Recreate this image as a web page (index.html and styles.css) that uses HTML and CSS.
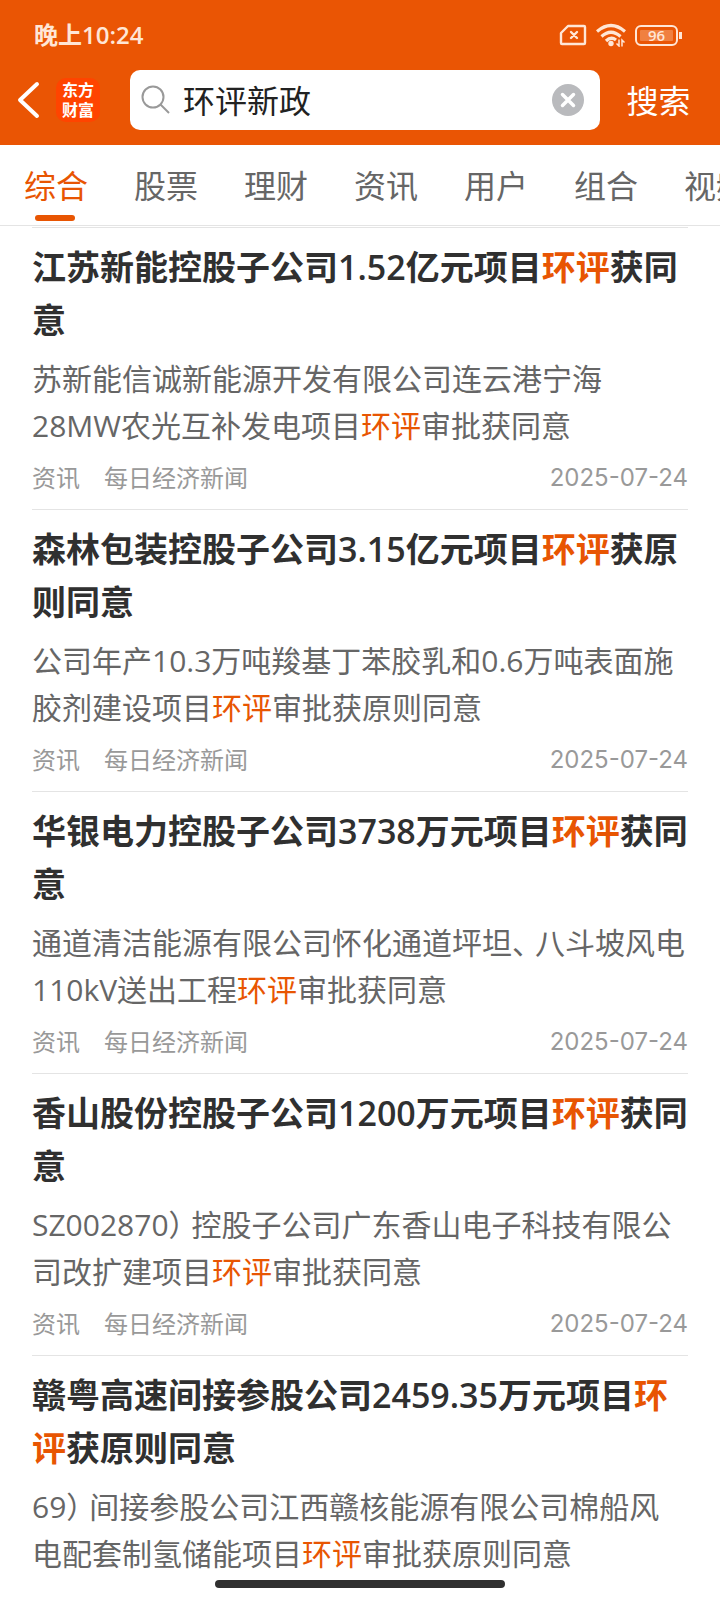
FILE: index.html
```html
<!DOCTYPE html>
<html lang="zh-CN">
	<head>
		<meta charset="UTF-8">
		<meta name="viewport" content="width=device-width, initial-scale=1">
		<title>环评新政 - 搜索</title>
		<link rel="stylesheet" href="styles.css">
	</head>
	<body>
		<header class="top">
			<!-- 状态栏 -->
			<div class="status">
				<span>晚上10:24</span>
				<div class="status-icons">
					<svg width="28" height="22" viewBox="0 0 28 22" fill="none" stroke="#ffe6d6" stroke-width="2.4" stroke-linejoin="round" stroke-linecap="round">
						<path d="M9 2h16q1 0 1 1v16q0 1-1 1H3q-1 0-1-1V9z"/>
						<path d="M12 8l6 6M18 8l-6 6"/>
					</svg>
					<svg width="30" height="24" viewBox="0 0 30 24" fill="none" stroke="#ffe6d6" stroke-width="3.2">
						<path d="M1 8.500Q15-3.500 29 8.500"/>
						<path d="M5.500 13.500Q15 5 24.500 13.500"/>
						<path d="M10 18Q15 13 20 17"/>
						<circle cx="15" cy="20.500" r="2.700" fill="#ffe6d6" stroke="none"/>
						<path d="M23 16.500v6.500l-2.500-2.500M26 23.500V17l2.500 2.500" stroke-width="1.500"/>
					</svg>
					<div class="battery">96</div>
				</div>
			</div>
			<!-- 搜索栏 -->
			<form class="search">
				<button class="back" type="button" aria-label="返回">
					<svg width="24" height="40" viewBox="0 0 24 40" fill="none" stroke="#fff" stroke-width="4" stroke-linecap="round" stroke-linejoin="round">
						<path d="M21 4L4 20l17 16"/>
					</svg>
				</button>
				<a class="logo" href="#">东方<br>财富</a>
				<div class="box">
					<svg width="30" height="30" viewBox="0 0 30 30" fill="none" stroke="#999" stroke-width="2">
						<circle cx="12" cy="12" r="10.500"/>
						<path d="M19.500 19.500L28 28"/>
					</svg>
					<input type="text" value="环评新政" aria-label="搜索内容">
					<button class="clear" type="button" aria-label="清空">
						<svg width="32" height="32" viewBox="0 0 32 32">
							<circle cx="16" cy="16" r="16" fill="#b9babd"/>
							<path d="M10.500 10.500l11 11M21.500 10.500l-11 11" stroke="#fff" stroke-width="3.500" stroke-linecap="round"/>
						</svg>
					</button>
				</div>
				<button class="go" type="submit">搜索</button>
			</form>
		</header>
		<nav class="tabs">
			<a class="on" href="#">综合</a>
			<a href="#">股票</a>
			<a href="#">理财</a>
			<a href="#">资讯</a>
			<a href="#">用户</a>
			<a href="#">组合</a>
			<a href="#">视频</a>
		</nav>
		<main class="list">
			<article class="item">
				<h2>江苏新能控股子公司1.52亿元项目<em>环评</em>获同意</h2>
				<p>苏新能信诚新能源开发有限公司连云港宁海28MW农光互补发电项目<em>环评</em>审批获同意</p>
				<div class="meta"><span>资讯</span><span>每日经济新闻</span><time>2025-07-24</time></div>
			</article>
			<article class="item">
				<h2>森林包装控股子公司3.15亿元项目<em>环评</em>获原则同意</h2>
				<p>公司年产10.3万吨羧基丁苯胶乳和0.6万吨表面施胶剂建设项目<em>环评</em>审批获原则同意</p>
				<div class="meta"><span>资讯</span><span>每日经济新闻</span><time>2025-07-24</time></div>
			</article>
			<article class="item">
				<h2>华银电力控股子公司3738万元项目<em>环评</em>获同意</h2>
				<p>通道清洁能源有限公司怀化通道坪坦<span class="punct">、</span>八斗坡风电110kV送出工程<em>环评</em>审批获同意</p>
				<div class="meta"><span>资讯</span><span>每日经济新闻</span><time>2025-07-24</time></div>
			</article>
			<article class="item">
				<h2>香山股份控股子公司1200万元项目<em>环评</em>获同意</h2>
				<p>SZ002870<span class="punct">）</span>控股子公司广东香山电子科技有限公司改扩建项目<em>环评</em>审批获同意</p>
				<div class="meta"><span>资讯</span><span>每日经济新闻</span><time>2025-07-24</time></div>
			</article>
			<article class="item">
				<h2>赣粤高速间接参股公司2459.35万元项目<em>环评</em>获原则同意</h2>
				<p>69<span class="punct">）</span>间接参股公司江西赣核能源有限公司棉船风电配套制氢储能项目<em>环评</em>审批获原则同意</p>
			</article>
		</main>
		<div class="home-bar"></div>
	</body>
</html>
```

FILE: styles.css
```css
*{
	margin: 0;
	padding: 0;
	box-sizing: border-box;
}
body{
	font-family: "Open Sans","Noto Sans CJK SC",sans-serif;
	background: #fff;
	color: #303030;
	overflow-x: hidden;
}
a{
	text-decoration: none;
	color: inherit;
}
button{
	border: none;
	background: none;
	font-family: inherit;
	cursor: pointer;
}
svg{
	display: block;
}
em{
	font-style: normal;
	color: #e85502;
}
.top{
	background: #ea5504;
	color: #fff;
	padding-bottom: 15px;
}
.status{
	height: 70px;
	padding: 0 42px 0 34px;
	display: flex;
	align-items: center;
	justify-content: space-between;
	font-size: 24px;
	line-height: 32px;
	font-weight: 600;
	color: #ffe6d6;
}
.status-icons{
	display: flex;
	align-items: center;
	gap: 9px;
}
.battery{
	position: relative;
	width: 43px;
	height: 21px;
	padding: 3px;
	border: 2px solid #ffe6d6;
	border-radius: 6px;
	background: #f08040 content-box;
	font-size: 15px;
	line-height: 11px;
	text-align: center;
}
.battery::after{
	content: "";
	position: absolute;
	right: -6px;
	top: 5px;
	width: 3px;
	height: 7px;
	background: #ffe6d6;
}
.search{
	display: flex;
	align-items: center;
	height: 60px;
	padding-left: 16px;
}
.logo{
	width: 44px;
	height: 44px;
	margin: 0 30px 0 16px;
	padding-top: 2px;
	border-radius: 10px;
	background: #ff4400;
	font-size: 16px;
	font-weight: 700;
	line-height: 20px;
	text-align: center;
}
.box{
	flex: 1;
	min-width: 0;
	height: 60px;
	padding: 0 16px 0 11px;
	display: flex;
	align-items: center;
	background: #fff;
	border-radius: 10px;
}
.box input{
	flex: 1;
	min-width: 0;
	height: 58px;
	margin: 0 0 2px 12px;
	border: none;
	outline: none;
	background: none;
	font-family: inherit;
	font-size: 32px;
	color: #222;
}
.go{
	width: 120px;
	padding: 2px 3px 0 0;
	color: #fff;
	font-size: 32px;
	line-height: 48px;
}
.tabs{
	display: flex;
	gap: 46px;
	height: 81px;
	padding-left: 24px;
	border-bottom: 1px solid #e4e4e4;
	overflow: hidden;
}
.tabs a{
	position: relative;
	flex: none;
	height: 80px;
	font-size: 32px;
	line-height: 82px;
	color: #666;
}
.tabs .on{
	color: #e85502;
}
.tabs .on::after{
	content: "";
	position: absolute;
	left: 11px;
	bottom: 4px;
	width: 40px;
	height: 6px;
	border-radius: 3px;
	background: #e85502;
}
.list{
	padding: 1px 32px 0;
}
.item{
	border-top: 1px solid #e4e4e4;
	padding: 13px 0 15px;
}
.item h2{
	font-size: 34px;
	font-weight: 600;
	line-height: 53px;
}
.item p{
	margin-top: 8px;
	font-size: 30px;
	line-height: 47px;
	color: #666;
}
/* 半角标点 */
.punct{
	font-feature-settings: "halt";
	padding-right: 8px;
}
.meta{
	display: flex;
	gap: 24px;
	margin-top: 13px;
	font-size: 24px;
	line-height: 32px;
	color: #999;
}
.meta time{
	margin-left: auto;
	font-family: Inter,sans-serif;
}
.home-bar{
	position: fixed;
	left: 50%;
	bottom: 12px;
	width: 290px;
	height: 8px;
	margin-left: -145px;
	border-radius: 4px;
	background: #303030;
}
```
